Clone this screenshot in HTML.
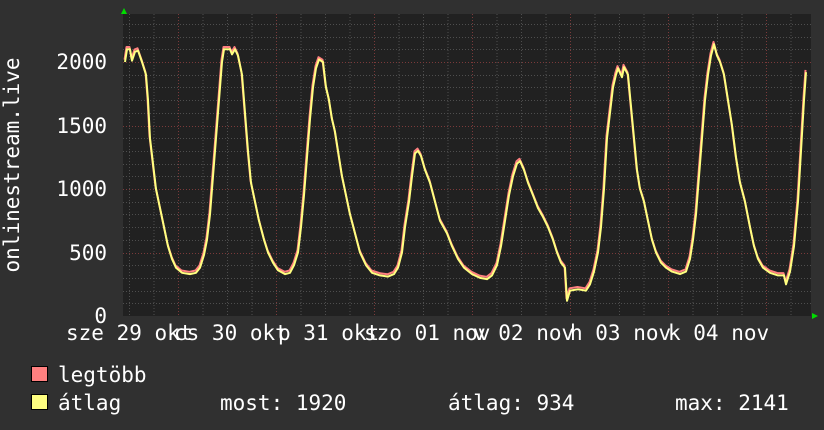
<!DOCTYPE html>
<html><head><meta charset="utf-8"><style>
html,body{margin:0;padding:0;background:#303030;}
svg{display:block}
text{font-family:"DejaVu Sans Mono","Liberation Mono",monospace;font-size:21px;fill:#fff}
</style></head><body>
<svg width="824" height="430" viewBox="0 0 824 430" xmlns="http://www.w3.org/2000/svg">
<rect width="824" height="430" fill="#303030"/>
<rect x="123" y="14" width="688" height="302" fill="#212121"/>
<g id="grid"></g>
<script>
(function(){
var ns="http://www.w3.org/2000/svg";var g=document.getElementById('grid');
function ln(x1,y1,x2,y2,c){var l=document.createElementNS(ns,'line');l.setAttribute('x1',x1);l.setAttribute('y1',y1);l.setAttribute('x2',x2);l.setAttribute('y2',y2);l.setAttribute('stroke',c);l.setAttribute('stroke-dasharray','1,2');g.appendChild(l);}
for(var i=-2;i<30;i++){var x=178+i*24.5;if(x<125||x>810)continue;ln(x+.5,14,x+.5,316,(i%4==0)?'#7a3a3a':'#4e4e4e');}
for(var k=1;k<=23;k++){var y=316-k*12.7;ln(123,Math.round(y)+.5,811,Math.round(y)+.5,(k%5==0)?'#7a3a3a':'#4e4e4e');}
var pts="125,2000;127,2100;130,2100;132,2010;135,2080;138,2090;142,2000;146,1900;148,1700;150,1400;153,1200;156,1000;160,850;164,700;168,550;172,450;176,380;182,340;190,330;196,340;200,380;204,480;207,600;210,800;213,1100;216,1400;219,1700;222,2000;224,2100;230,2100;232,2060;235,2100;238,2050;242,1900;245,1600;248,1300;251,1050;255,900;259,750;264,600;268,500;273,420;278,360;285,330;290,340;294,400;298,500;301,700;304,950;307,1250;310,1550;313,1800;316,1950;319,2020;323,2000;326,1800;329,1700;332,1550;335,1450;338,1300;342,1100;346,950;350,800;355,650;360,500;366,400;372,340;380,320;388,310;394,330;398,380;402,500;405,700;409,900;412,1100;415,1280;418,1300;421,1260;425,1150;430,1050;435,900;440,750;447,650;452,550;458,450;464,380;472,330;480,300;487,290;492,320;497,400;501,550;505,750;509,950;513,1100;517,1200;520,1220;524,1150;528,1050;533,950;538,850;543,780;548,700;553,600;557,500;561,420;565,380;567,120;570,200;578,210;586,200;590,250;594,350;598,500;601,700;604,1000;607,1400;610,1600;613,1800;616,1900;618,1950;622,1880;624,1960;628,1900;631,1650;634,1400;637,1150;640,1000;644,900;648,750;652,600;656,500;661,420;666,380;672,350;680,330;686,350;690,450;693,600;696,800;699,1100;702,1400;705,1700;708,1900;711,2050;714,2140;717,2050;720,2000;724,1900;728,1700;732,1500;736,1250;740,1050;745,900;750,700;754,550;758,450;763,380;770,340;778,320;784,320;786,250;790,350;794,550;798,900;801,1300;804,1700;806,1920".split(';');
var a=[],b=[];pts.forEach(function(p){var q=p.split(',');var x=+q[0],v=+q[1];a.push(x+','+(316-v*0.127).toFixed(1));b.push((x-0.5)+','+(316-(v+18)*0.127).toFixed(1));});
function pl(p,c){var e=document.createElementNS(ns,'polyline');e.setAttribute('points',p.join(' '));e.setAttribute('fill','none');e.setAttribute('stroke',c);e.setAttribute('stroke-width','2');e.setAttribute('stroke-linejoin','round');g.appendChild(e);}
pl(b,'#ff8080');pl(a,'#ffff80');
})();
</script>
<polygon points="121,14 127,14 124,8" fill="#00dd00"/>
<polygon points="812,313 812,319 818,316" fill="#00dd00"/>
<g text-anchor="end">
<text x="107" y="69">2000</text>
<text x="107" y="133">1500</text>
<text x="107" y="196">1000</text>
<text x="107" y="260">500</text>
<text x="107" y="323">0</text>
</g>
<text transform="translate(19,165) rotate(-90)" text-anchor="middle">onlinestream.live</text>
<text x="66" y="340">sze 29 okt</text>
<text x="174" y="340">cs 30 okt</text>
<text x="278" y="340">p 31 okt</text>
<text x="364" y="340">szo 01 nov</text>
<text x="473" y="340">v 02 nov</text>
<text x="570" y="340">h 03 nov</text>
<text x="668" y="340">k 04 nov</text>
<rect x="31.5" y="366.5" width="16" height="15" fill="#ff8080" stroke="#000"/>
<rect x="31.5" y="394.5" width="16" height="15" fill="#ffff80" stroke="#000"/>
<text x="58" y="382">legtöbb</text>
<text x="58" y="410">átlag</text>
<text x="220" y="410">most: 1920</text>
<text x="448" y="410">átlag: 934</text>
<text x="675" y="410">max: 2141</text>
</svg>
</body></html>
